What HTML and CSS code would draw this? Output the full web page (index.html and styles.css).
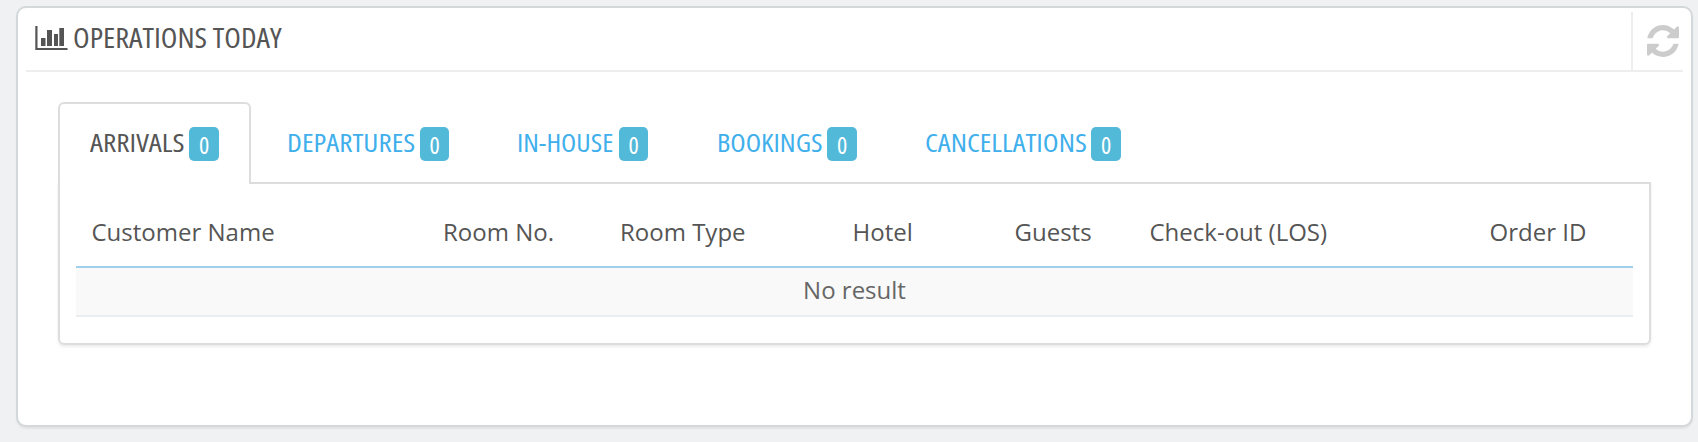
FILE: index.html
```
<!DOCTYPE html>
<html lang="en">
<head>
<meta charset="utf-8">
<title>Operations Today</title>
<link rel="stylesheet" href="styles.css">
</head>
<body>
<section class="panel">
  <header class="panel-header">
    <svg class="icon-chart" width="33" height="26" viewBox="0 0 33 26"><path fill="#555" d="M.3 1h2.2v22h30v2H.3zM6 13h4.500v8H6zM12 5h5v16h-5zM19 9h4v12h-4zM24.300 3h4.700v18h-4.700z"/></svg>
    <h1 class="title"><span class="cond">OPERATIONS TODAY</span></h1>
    <button class="refresh" aria-label="Refresh">
      <svg width="32" height="32" viewBox="0 0 1536 1536"><path fill="#ccc" d="M1511 928q0 5-1 7-64 268-268 434.500T764 1536q-146 0-282.500-55T238 1324l-129 129q-19 19-45 19t-45-19-19-45V960q0-26 19-45t45-19h448q26 0 45 19t19 45-19 45l-137 137q71 66 161 102t187 36q134 0 250-65t186-179q11-17 53-117 8-23 30-23h192q13 0 22.500 9.500t9.500 22.500zm25-800v448q0 26-19 45t-45 19h-448q-26 0-45-19t-19-45 19-45l138-138Q969 256 768 256q-134 0-250 65T332 500q-11 17-53 117-8 23-30 23H50q-13 0-22.500-9.500T18 608v-7q65-268 270-434.500T768 0q146 0 284 55.500T1297 212l130-129q19-19 45-19t45 19 19 45z"/></svg>
    </button>
  </header>
  <nav class="tabs">
    <a class="tab active"><span class="label"><span class="cond">ARRIVALS</span></span><span class="badge"><span class="cond">0</span></span></a>
    <a class="tab departures"><span class="label"><span class="cond">DEPARTURES</span></span><span class="badge"><span class="cond">0</span></span></a>
    <a class="tab inhouse"><span class="label"><span class="cond">IN-HOUSE</span></span><span class="badge"><span class="cond">0</span></span></a>
    <a class="tab bookings"><span class="label"><span class="cond">BOOKINGS</span></span><span class="badge"><span class="cond">0</span></span></a>
    <a class="tab cancellations"><span class="label"><span class="cond">CANCELLATIONS</span></span><span class="badge"><span class="cond">0</span></span></a>
  </nav>
  <div class="tab-content">
    <div class="thead">
      <span>Customer Name</span><span>Room No.</span><span>Room Type</span><span>Hotel</span><span>Guests</span><span>Check-out (LOS)</span><span>Order ID</span>
    </div>
    <div class="empty">No result</div>
  </div>
</section>
</body>
</html>
```
FILE: styles.css
```
* { box-sizing: border-box; }
body { margin: 0; padding: 6px 5px 15px 16px; height: 442px; background: #eff1f3; font-family: "Open Sans", sans-serif; color: #555; overflow: hidden; }
.panel { height: 421px; background: #fff; border: 2px solid #d3d8db; border-radius: 10px; box-shadow: 0 2px 2px rgba(0,0,0,.06); padding: 4px 8px 0; }
.panel-header { height: 60px; border-bottom: 2px solid #eee; display: flex; align-items: flex-start; padding-left: 9px; }
.icon-chart { display: block; margin-top: 13px; margin-right: 5px; flex: none; }
.title { margin: 7px 0 0; font-weight: 400; font-size: 27px; line-height: 38px; width: 208px; white-space: nowrap; }
.cond { display: inline-block; font-stretch: 75%; transform-origin: 0 50%; white-space: nowrap; }
.title .cond { transform: scaleX(1.13); }
.refresh { margin-left: auto; width: 52px; height: 58px; border: 0; border-left: 2px solid #eee; background: none; padding: 13px 0 0 14px; display: flex; align-items: flex-start; }
.refresh svg { display: block; }
.tabs { display: flex; margin: 30px 0 0 32px; height: 82px; position: relative; z-index: 1; }
.tab { display: flex; align-items: flex-start; height: 82px; padding: 23px 30px 0; border: 2px solid transparent; border-bottom: 0; color: #40afec; font-size: 26px; line-height: 34px; margin-right: 4px; }
.tab.active { color: #555; background: #fff; border-color: #ddd; border-radius: 6px 6px 0 0; }
.label { width: 94px; margin-right: 5px; margin-top: -2px; white-space: nowrap; }
.badge { width: 30px; height: 34px; border-radius: 5px; background: #53b9d9; color: #fff; font-size: 24px; line-height: 36px; text-align: center; }
.active { width: 193px; }
.active .label .cond { transform: scaleX(1.127); }
.departures .label { width: 128px; }
.departures .label .cond { transform: scaleX(1.12); }
.departures .badge, .inhouse .badge { width: 29px; }
.inhouse .label { width: 97px; }
.inhouse .label .cond { transform: scaleX(1.07); }
.bookings .label { width: 105px; margin-left: 1px; }
.bookings .label .cond { transform: scaleX(1.085); }
.cancellations .label { width: 161px; }
.cancellations .label .cond { transform: scaleX(1.115); }
.tab-content { margin: -2px 32px 0; height: 163px; border: 2px solid #ddd; border-radius: 0 0 6px 6px; box-shadow: 0 2px 3px rgba(0,0,0,.08); padding: 0 16px; font-size: 24px; }
.thead { display: grid; grid-template-columns: 351.5px 177px 232.5px 162px 135px 340px auto; height: 84px; padding: 31px 0 0 15.500px; line-height: 33px; border-bottom: 2px solid #a0d0eb; white-space: nowrap; }
.empty { height: 49px; background: #f9f9f9; border-bottom: 2px solid #eaedef; text-align: center; line-height: 44px; color: #666; }
```
